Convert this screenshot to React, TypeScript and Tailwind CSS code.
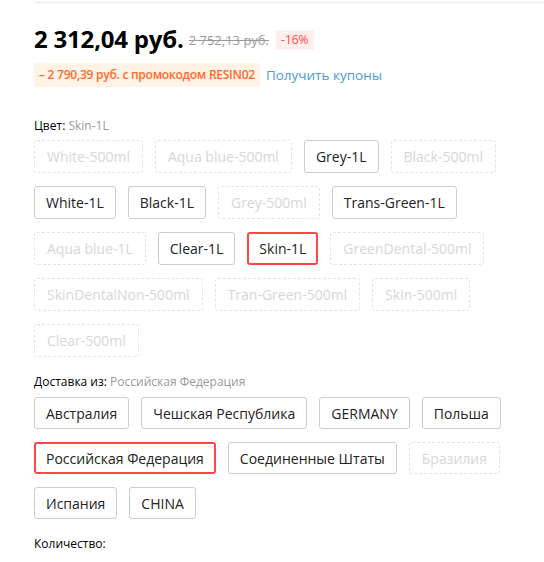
import React from "react";

type Opt = { label: string; state: "on" | "off" | "sel" };

const colors: Opt[] = [
  { label: "White-500ml", state: "off" },
  { label: "Aqua blue-500ml", state: "off" },
  { label: "Grey-1L", state: "on" },
  { label: "Black-500ml", state: "off" },
  { label: "White-1L", state: "on" },
  { label: "Black-1L", state: "on" },
  { label: "Grey-500ml", state: "off" },
  { label: "Trans-Green-1L", state: "on" },
  { label: "Aqua blue-1L", state: "off" },
  { label: "Clear-1L", state: "on" },
  { label: "Skin-1L", state: "sel" },
  { label: "GreenDental-500ml", state: "off" },
  { label: "SkinDentalNon-500ml", state: "off" },
  { label: "Tran-Green-500ml", state: "off" },
  { label: "Skin-500ml", state: "off" },
  { label: "Clear-500ml", state: "off" },
];

const ships: Opt[] = [
  { label: "Австралия", state: "on" },
  { label: "Чешская Республика", state: "on" },
  { label: "GERMANY", state: "on" },
  { label: "Польша", state: "on" },
  { label: "Российская Федерация", state: "sel" },
  { label: "Соединенные Штаты", state: "on" },
  { label: "Бразилия", state: "off" },
  { label: "Испания", state: "on" },
  { label: "CHINA", state: "on" },
];

function Btn({ o, h }: { o: Opt; h: string }) {
  const base = `${h} flex items-center rounded-[3px] text-[14px] whitespace-nowrap`;
  if (o.state === "off")
    return (
      <div className={`${base} px-3 border border-dashed border-[#e3e3e3] text-[#d6d6d6]`}>
        {o.label}
      </div>
    );
  if (o.state === "sel")
    return (
      <div className={`${base} px-[10px] border-2 border-[#ff4747] text-[#222]`}>
        {o.label}
      </div>
    );
  return (
    <div className={`${base} px-[11px] border border-[#cccccc] text-[#222]`}>{o.label}</div>
  );
}

export default function App() {
  return (
    <div className="w-[544px] h-[562px] bg-white pl-[34px] font-['Open_Sans',sans-serif] overflow-hidden">
      <div className="h-[3px] mt-[1px] bg-[#f5f5f5]" />
      <div className="flex items-center mt-[20px] h-[30px]">
        <span className="text-[24px] font-bold text-black leading-[30px] tracking-[-0.2px]">
          2 312,04 руб.
        </span>
        <span className="ml-[5px] mt-[3px] text-[13px] text-[#999] line-through decoration-[#999]">
          2 752,13 руб.
        </span>
        <span className="ml-[7px] mt-[2px] h-[20px] px-[5px] flex items-center bg-[#ffeeee] text-[#ff4747] text-[12px] rounded-[2px]">
          -16%
        </span>
      </div>
      <div className="flex items-center mt-[9px] h-[24px]">
        <span className="h-[24px] px-[5px] flex items-center bg-[#fff3e6] text-[#ff6a2b] text-[12px] font-semibold tracking-[-0.25px] rounded-[3px]">
          – 2 790,39 руб. с промокодом RESIN02
        </span>
        <span className="ml-[6px] text-[13.5px] text-[#4a9bd1]">Получить купоны</span>
      </div>
      <div className="mt-[31px] text-[12px] leading-[16px] text-black">
        Цвет: <span className="text-[#999]">Skin-1L</span>
      </div>
      <div className="mt-[6px] flex flex-wrap gap-x-3 gap-y-[13px] pr-[6px]">
        {colors.map((o) => (
          <Btn key={o.label} o={o} h="h-[33px]" />
        ))}
      </div>
      <div className="mt-[17px] text-[12px] leading-[16px] text-black">
        Доставка из: <span className="text-[#999]">Российская Федерация</span>
      </div>
      <div className="mt-[7px] flex flex-wrap gap-x-3 gap-y-[13px] pr-[6px]">
        {ships.map((o) => (
          <Btn key={o.label} o={o} h="h-[32px]" />
        ))}
      </div>
      <div className="mt-[17px] text-[12px] leading-[16px] text-black">Количество:</div>
    </div>
  );
}
